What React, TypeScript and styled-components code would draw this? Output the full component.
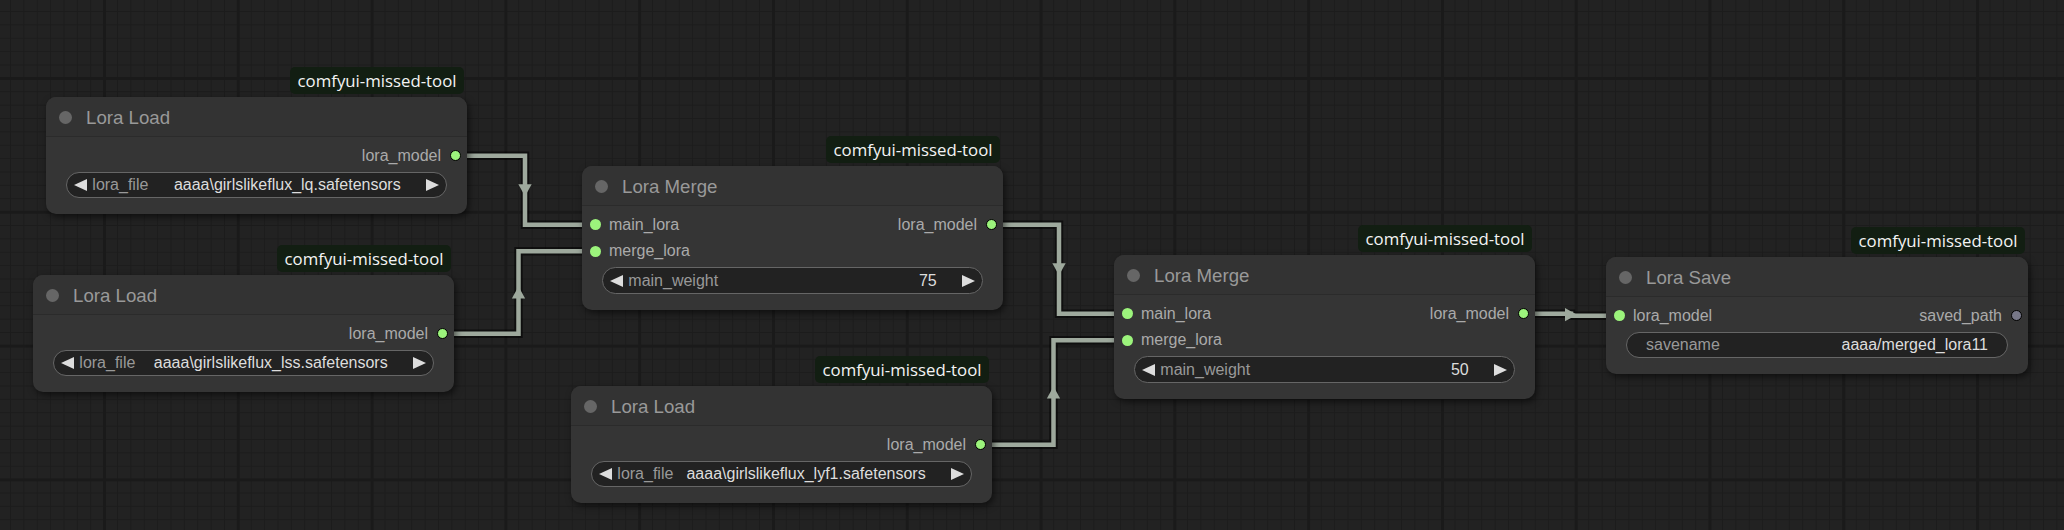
import React from 'react';
import styled, { createGlobalStyle } from 'styled-components';

const Global = createGlobalStyle`
  html, body { margin: 0; padding: 0; background: #222; }
  body { width: 2064px; height: 530px; overflow: hidden; }
`;

const Canvas = styled.div`
  position: relative;
  width: 2064px;
  height: 530px;
  overflow: hidden;
  background-color: #222222;
  background-image:
    linear-gradient(to right, #1a1a1a 0 2.5px, transparent 2.5px),
    linear-gradient(to bottom, #1a1a1a 0 2.5px, transparent 2.5px),
    linear-gradient(to right, #1c1c1c 0 1px, transparent 1px),
    linear-gradient(to bottom, #1c1c1c 0 1px, transparent 1px);
  background-size: 133.8px 100%, 100% 133.8px, 13.38px 100%, 100% 13.38px;
  background-position: 103px 0, 0 77px, 10px 0, 0 11px;
  font-family: "Liberation Sans", Arial, sans-serif;
`;

const LinkLayer = styled.svg`
  position: absolute;
  left: 0;
  top: 0;
  width: 2064px;
  height: 530px;
  pointer-events: none;
`;

const NodeBox = styled.div<{ $x: number; $y: number; $w: number }>`
  position: absolute;
  left: ${(p) => p.$x}px;
  top: ${(p) => p.$y}px;
  width: ${(p) => p.$w}px;
  background: #353535;
  border-radius: 10px;
  box-shadow: 2px 3px 7px rgba(0, 0, 0, 0.55);
`;

const Badge = styled.div`
  position: absolute;
  right: 3.5px;
  bottom: calc(100% + 3.5px);
  height: 26.5px;
  box-sizing: border-box;
  padding: 0 7px 0 8px;
  display: flex;
  align-items: center;
  background: #121e12;
  border-radius: 5px;
  font-family: "Open Sans", "Liberation Sans", sans-serif;
  font-size: 16.8px;
  color: #f4f4f4;
  white-space: nowrap;
`;

const TitleBar = styled.div`
  height: 40px;
  box-sizing: border-box;
  display: flex;
  align-items: center;
  gap: 14px;
  padding: 2px 0 0 13px;
  background: #333333;
  border-radius: 10px 10px 0 0;
  border-bottom: 1px solid #2b2b2b;
`;

const TitleDot = styled.span`
  flex: none;
  width: 13px;
  height: 13px;
  border-radius: 50%;
  background: #666;
`;

const TitleText = styled.span`
  font-size: 18.67px;
  color: #999;
  white-space: nowrap;
`;

const Body = styled.div`
  padding: 5.33px 0 15.67px;
`;

const SlotRow = styled.div`
  height: 26.67px;
  display: flex;
  align-items: center;
`;

const InSlot = styled.div`
  display: flex;
  align-items: center;
  gap: 8.5px;
  padding-left: 7.5px;
`;

const OutSlot = styled.div`
  display: flex;
  align-items: center;
  gap: 8.5px;
  padding-right: 6.5px;
  margin-left: auto;
`;

const Dot = styled.span<{ $out?: boolean; $color: string }>`
  flex: none;
  width: 11px;
  height: 11px;
  box-sizing: border-box;
  border-radius: 50%;
  background: ${(p) => p.$color};
  border: ${(p) => (p.$out ? '1.5px solid #000' : 'none')};
`;

const SlotLabel = styled.span`
  font-size: 16px;
  line-height: 1;
  color: #aaa;
  white-space: nowrap;
`;

const Widget = styled.div<{ $text?: boolean }>`
  margin: 2.67px 20px 0;
  height: 26.67px;
  box-sizing: border-box;
  border: 1px solid #666;
  border-radius: 13.33px;
  background: #222;
  display: flex;
  align-items: center;
  padding: ${(p) => (p.$text ? '0 19px' : '0 7px')};
  font-size: 16px;
  white-space: nowrap;
`;

const ArrowLeft = styled.span`
  flex: none;
  width: 0;
  height: 0;
  border-top: 6.67px solid transparent;
  border-bottom: 6.67px solid transparent;
  border-right: 13.33px solid #ddd;
`;

const ArrowRight = styled.span`
  flex: none;
  width: 0;
  height: 0;
  border-top: 6.67px solid transparent;
  border-bottom: 6.67px solid transparent;
  border-left: 13.33px solid #ddd;
`;

const WLabel = styled.span<{ $text?: boolean }>`
  color: #999;
  margin-left: ${(p) => (p.$text ? '0' : '5.33px')};
`;

const WValue = styled.span<{ $text?: boolean }>`
  color: #ddd;
  margin-left: auto;
  margin-right: ${(p) => (p.$text ? '0' : '25.33px')};
`;

type Slot = { label: string; color: string };
type WidgetDef = { kind: 'combo' | 'number' | 'text'; label: string; value: string };
type NodeDef = {
  id: string;
  x: number;
  y: number;
  w: number;
  title: string;
  inputs: Slot[];
  outputs: Slot[];
  widget: WidgetDef;
};

const GREEN = '#9cf47c';
const GREY = '#777788';

const nodes: NodeDef[] = [
  {
    id: 'la', x: 46, y: 97, w: 421, title: 'Lora Load',
    inputs: [], outputs: [{ label: 'lora_model', color: GREEN }],
    widget: { kind: 'combo', label: 'lora_file', value: 'aaaa\\girlslikeflux_lq.safetensors' },
  },
  {
    id: 'lb', x: 33, y: 275, w: 421, title: 'Lora Load',
    inputs: [], outputs: [{ label: 'lora_model', color: GREEN }],
    widget: { kind: 'combo', label: 'lora_file', value: 'aaaa\\girlslikeflux_lss.safetensors' },
  },
  {
    id: 'ma', x: 582, y: 166, w: 421, title: 'Lora Merge',
    inputs: [{ label: 'main_lora', color: GREEN }, { label: 'merge_lora', color: GREEN }],
    outputs: [{ label: 'lora_model', color: GREEN }],
    widget: { kind: 'number', label: 'main_weight', value: '75' },
  },
  {
    id: 'lc', x: 571, y: 386, w: 421, title: 'Lora Load',
    inputs: [], outputs: [{ label: 'lora_model', color: GREEN }],
    widget: { kind: 'combo', label: 'lora_file', value: 'aaaa\\girlslikeflux_lyf1.safetensors' },
  },
  {
    id: 'mb', x: 1114, y: 255, w: 421, title: 'Lora Merge',
    inputs: [{ label: 'main_lora', color: GREEN }, { label: 'merge_lora', color: GREEN }],
    outputs: [{ label: 'lora_model', color: GREEN }],
    widget: { kind: 'number', label: 'main_weight', value: '50' },
  },
  {
    id: 'sv', x: 1606, y: 257, w: 422, title: 'Lora Save',
    inputs: [{ label: 'lora_model', color: GREEN }],
    outputs: [{ label: 'saved_path', color: GREY }],
    widget: { kind: 'text', label: 'savename', value: 'aaaa/merged_lora11' },
  },
];

const links: [string, number, string, number][] = [
  ['la', 0, 'ma', 0],
  ['lb', 0, 'ma', 1],
  ['ma', 0, 'mb', 0],
  ['lc', 0, 'mb', 1],
  ['mb', 0, 'sv', 0],
];

const TITLE_H = 40;
const SLOT_Y0 = 18.67;
const SLOT_H = 26.67;

function slotPos(id: string, idx: number, out: boolean): [number, number] {
  const n = nodes.find((k) => k.id === id)!;
  const y = n.y + TITLE_H + SLOT_Y0 + idx * SLOT_H;
  const x = out ? n.x + n.w - 12 : n.x + 13;
  return [x, y];
}

const LINK_COLOR = '#9ea99d';

function Links() {
  return (
    <LinkLayer viewBox="0 0 2064 530">
      {links.map(([a, ai, b, bi], i) => {
        const [x1, y1] = slotPos(a, ai, true);
        const [x2, y2] = slotPos(b, bi, false);
        const mx = (x1 + x2) / 2;
        const my = (y1 + y2) / 2;
        const d = `M${x1} ${y1} L${mx} ${y1} L${mx} ${y2} L${x2} ${y2}`;
        let pts: string;
        if (Math.abs(y2 - y1) < 20) {
          pts = `${mx - 6},${my - 6.67} ${mx - 6},${my + 6.67} ${mx + 6},${my}`;
        } else if (y2 > y1) {
          pts = `${mx - 6.67},${my - 6} ${mx + 6.67},${my - 6} ${mx},${my + 6}`;
        } else {
          pts = `${mx - 6.67},${my + 6} ${mx + 6.67},${my + 6} ${mx},${my - 6}`;
        }
        return (
          <g key={i}>
            <path d={d} fill="none" stroke="rgba(0,0,0,0.55)" strokeWidth={8.5} strokeLinejoin="miter" />
            <path d={d} fill="none" stroke={LINK_COLOR} strokeWidth={4.5} strokeLinejoin="miter" />
            <polygon points={pts} fill={LINK_COLOR} />
          </g>
        );
      })}
    </LinkLayer>
  );
}

function Node({ n }: { n: NodeDef }) {
  const rows = Math.max(n.inputs.length, n.outputs.length);
  const isText = n.widget.kind === 'text';
  return (
    <NodeBox $x={n.x} $y={n.y} $w={n.w}>
      <Badge>comfyui-missed-tool</Badge>
      <TitleBar>
        <TitleDot />
        <TitleText>{n.title}</TitleText>
      </TitleBar>
      <Body>
        {Array.from({ length: rows }).map((_, i) => {
          const inp = n.inputs[i];
          const out = n.outputs[i];
          return (
            <SlotRow key={i}>
              {inp && (
                <InSlot>
                  <Dot $color={inp.color} />
                  <SlotLabel>{inp.label}</SlotLabel>
                </InSlot>
              )}
              {out && (
                <OutSlot>
                  <SlotLabel>{out.label}</SlotLabel>
                  <Dot $out $color={out.color} />
                </OutSlot>
              )}
            </SlotRow>
          );
        })}
        <Widget $text={isText}>
          {!isText && <ArrowLeft />}
          <WLabel $text={isText}>{n.widget.label}</WLabel>
          <WValue $text={isText}>{n.widget.value}</WValue>
          {!isText && <ArrowRight />}
        </Widget>
      </Body>
    </NodeBox>
  );
}

export default function App() {
  return (
    <>
      <Global />
      <Canvas>
        <Links />
        {nodes.map((n) => (
          <Node key={n.id} n={n} />
        ))}
      </Canvas>
    </>
  );
}
